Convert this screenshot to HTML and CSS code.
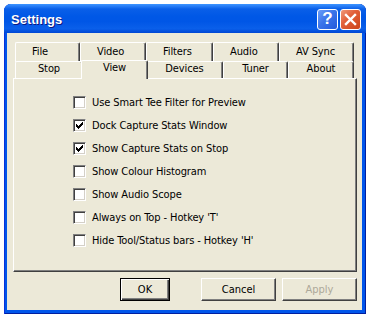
FILE: index.html
```html
<!DOCTYPE html>
<html>
<head>
    <meta charset="UTF-8">
    <title>Settings</title>
    <link rel="stylesheet" href="styles.css">
</head>
<body>
    <!-- Dialog window: title bar + client area -->
    <div class="window">
        <div class="titlebar">
            <span class="title">Settings</span>
            <div class="caption-buttons">
                <span class="cap-btn help">?</span>
                <span class="cap-btn close">
                    <svg width="13" height="13" viewBox="0 0 13 13">
                        <path d="M2 2L11 11M11 2L2 11" stroke="#fff" stroke-width="2.4" stroke-linecap="square" />
                    </svg>
                </span>
            </div>
        </div>

        <div class="client">
            <!-- Two rows of tabs, the front row holds the selected one -->
            <div class="tabs">
                <div class="tab-row back">
                    <div class="tab">File</div>
                    <div class="tab">Video</div>
                    <div class="tab">Filters</div>
                    <div class="tab">Audio</div>
                    <div class="tab">AV Sync</div>
                </div>
                <div class="tab-row front">
                    <div class="tab">Stop</div>
                    <div class="tab selected">View</div>
                    <div class="tab">Devices</div>
                    <div class="tab">Tuner</div>
                    <div class="tab">About</div>
                </div>
            </div>

            <div class="panel">
                <ul class="options">
                    <li class="option"><span class="checkbox"></span>Use Smart Tee Filter for Preview</li>
                    <li class="option"><span class="checkbox checked"><svg width="7" height="7" viewBox="0 0 7 7"><path d="M6 0h1v1h-1zM5 1h2v1h-2zM0 2h1v1h-1zM4 2h3v1h-3zM0 3h2v1h-2zM3 3h3v1h-3zM0 4h5v1h-5zM1 5h3v1h-3zM2 6h1v1h-1z" fill="#000" shape-rendering="crispEdges" /></svg></span>Dock Capture Stats Window</li>
                    <li class="option"><span class="checkbox checked"><svg width="7" height="7" viewBox="0 0 7 7"><path d="M6 0h1v1h-1zM5 1h2v1h-2zM0 2h1v1h-1zM4 2h3v1h-3zM0 3h2v1h-2zM3 3h3v1h-3zM0 4h5v1h-5zM1 5h3v1h-3zM2 6h1v1h-1z" fill="#000" shape-rendering="crispEdges" /></svg></span>Show Capture Stats on Stop</li>
                    <li class="option"><span class="checkbox"></span>Show Colour Histogram</li>
                    <li class="option"><span class="checkbox"></span>Show Audio Scope</li>
                    <li class="option"><span class="checkbox"></span>Always on Top - Hotkey 'T'</li>
                    <li class="option"><span class="checkbox"></span>Hide Tool/Status bars - Hotkey 'H'</li>
                </ul>
            </div>

            <div class="buttons">
                <button class="btn default">OK</button>
                <button class="btn">Cancel</button>
                <button class="btn" disabled>Apply</button>
            </div>
        </div>
    </div>
</body>
</html>
```

FILE: styles.css
```css
body {
    margin: 0;
    background: #fff;
    font-family: "DejaVu Sans Condensed", "DejaVu Sans", sans-serif;
    font-stretch: condensed;
    font-size: 11px;
    letter-spacing: -0.1px;
    color: #000;
}

/* Window frame */
.window {
    margin: 4px 0 0 4px;
    width: 362px;
    height: 310px;
    display: flex;
    flex-direction: column;
    background: #0055ea;
    border-radius: 7px 7px 0 0;
    box-shadow: inset 1px 0 #0831d9, inset -1px 0 #001ea0, inset 0 -1px #001ea0;
}

.titlebar {
    height: 29px;
    display: flex;
    align-items: center;
    justify-content: space-between;
    padding: 0 5px 0 7px;
    border-radius: 7px 7px 0 0;
    background: linear-gradient(#3d95ff 0, #2a7ff7 2px, #0a5fe8 5px, #0058e6 12px, #0056e6 60%, #0a5fea 85%, #0047d4 100%);
}

.title {
    font-family: "Liberation Sans", sans-serif;
    font-stretch: normal;
    font-weight: bold;
    font-size: 13px;
    letter-spacing: 0;
    color: #fff;
    text-shadow: 1px 1px #0a1883;
    margin-top: 1px;
}

.caption-buttons {
    display: flex;
    gap: 2px;
    margin-top: 1px;
}

.cap-btn {
    width: 19px;
    height: 19px;
    border: 1px solid #fff;
    border-radius: 3px;
    display: flex;
    align-items: center;
    justify-content: center;
}

.cap-btn.help {
    background: linear-gradient(135deg, #6a9ef8 0%, #3b74ea 45%, #2359db 100%);
    color: #fff;
    font-family: "Liberation Sans", sans-serif;
    font-stretch: normal;
    font-weight: bold;
    font-size: 17px;
}

.cap-btn.close {
    background: linear-gradient(135deg, #f09a7c 0%, #e2603a 40%, #cc4418 100%);
}

/* Client area */
.client {
    flex: 1;
    margin: 0 4px 4px 3px;
    background: #ece9d8;
    padding: 9px 5px 0 6px;
    display: flex;
    flex-direction: column;
}

.tabs {
    padding: 0 2px;
}

.tab-row {
    display: grid;
    height: 18px;
}

.tab-row.back {
    grid-template-columns: 65px 66px 67px 66px 75px;
}

.tab-row.front {
    grid-template-columns: 68px 63px 77px 65px 66px;
    position: relative;
    z-index: 1;
}

.tab {
    background: #ece9d8;
    border-top: 1px solid #fff;
    border-left: 1px solid #fff;
    border-right: 1px solid #404040;
    box-shadow: inset -1px 0 #808080;
    border-radius: 2px 2px 0 0;
    padding: 2px 0 0 16px;
    line-height: 13px;
    white-space: nowrap;
    height: 20px;
    box-sizing: border-box;
}

.tab-row.front .tab {
    margin-top: 1px;
    padding: 0;
    text-align: center;
    height: 17px;
}

.tab-row.front .tab.selected {
    margin: 0 -2px;
    height: 19px;
    position: relative;
    z-index: 2;
}

.panel {
    height: 194px;
    box-sizing: border-box;
    border-top: 1px solid #fff;
    border-left: 1px solid #fff;
    border-right: 1px solid #404040;
    border-bottom: 1px solid #404040;
    box-shadow: inset -1px -1px #808080;
}

.options {
    list-style: none;
    margin: 0;
    padding: 12px 0 0 59px;
}

.option {
    height: 23px;
    display: flex;
    align-items: center;
}

.checkbox {
    width: 13px;
    height: 13px;
    box-sizing: border-box;
    background: #fff;
    border-top: 1px solid #808080;
    border-left: 1px solid #808080;
    border-right: 1px solid #fff;
    border-bottom: 1px solid #fff;
    box-shadow: inset 1px 1px #404040, inset -1px -1px #d4d0c8;
    margin-right: 6px;
    display: flex;
    align-items: center;
    justify-content: center;
}

/* Dialog buttons */
.buttons {
    display: flex;
    justify-content: flex-end;
    gap: 6px;
    margin-top: 6px;
}

.btn {
    width: 75px;
    height: 23px;
    padding: 0;
    font: inherit;
    background: #ece9d8;
    color: #000;
    border-top: 1px solid #fff;
    border-left: 1px solid #fff;
    border-right: 1px solid #404040;
    border-bottom: 1px solid #404040;
    box-shadow: inset -1px -1px #808080;
}

.btn.default {
    width: 50px;
    margin-right: 25px;
    border: 1px solid #000;
    box-shadow: inset 1px 1px #fff, inset -1px -1px #404040, inset -2px -2px #808080;
}

.btn:disabled {
    color: #aca899;
}
```
